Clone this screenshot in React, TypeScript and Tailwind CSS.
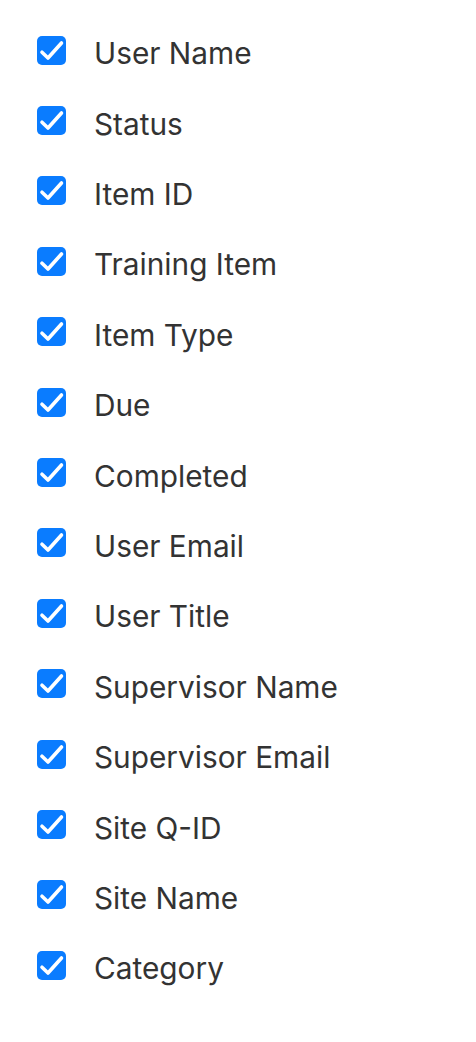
const columns = [
  "User Name",
  "Status",
  "Item ID",
  "Training Item",
  "Item Type",
  "Due",
  "Completed",
  "User Email",
  "User Title",
  "Supervisor Name",
  "Supervisor Email",
  "Site Q-ID",
  "Site Name",
  "Category",
];

function CheckBox() {
  return (
    <span className="block h-[29px] w-[29px] shrink-0 rounded-[5px] bg-[#0a7cff]">
      <svg width="29" height="29" viewBox="0 0 29 29" fill="none">
        <path
          d="M5 16.2l6 5.8L24.5 7"
          stroke="#fff"
          strokeWidth="3.6"
          strokeLinecap="round"
          strokeLinejoin="round"
        />
      </svg>
    </span>
  );
}

export default function App() {
  return (
    <div className="min-h-[1042px] w-[476px] bg-white pt-[15px] font-['Inter',sans-serif]">
      {columns.map((c) => (
        <label key={c} className="flex h-[70.4px] items-center pl-[37px]">
          <CheckBox />
          <span className="ml-[28px] translate-y-[4px] text-[29.8px] leading-none text-[#333333]">{c}</span>
        </label>
      ))}
    </div>
  );
}
